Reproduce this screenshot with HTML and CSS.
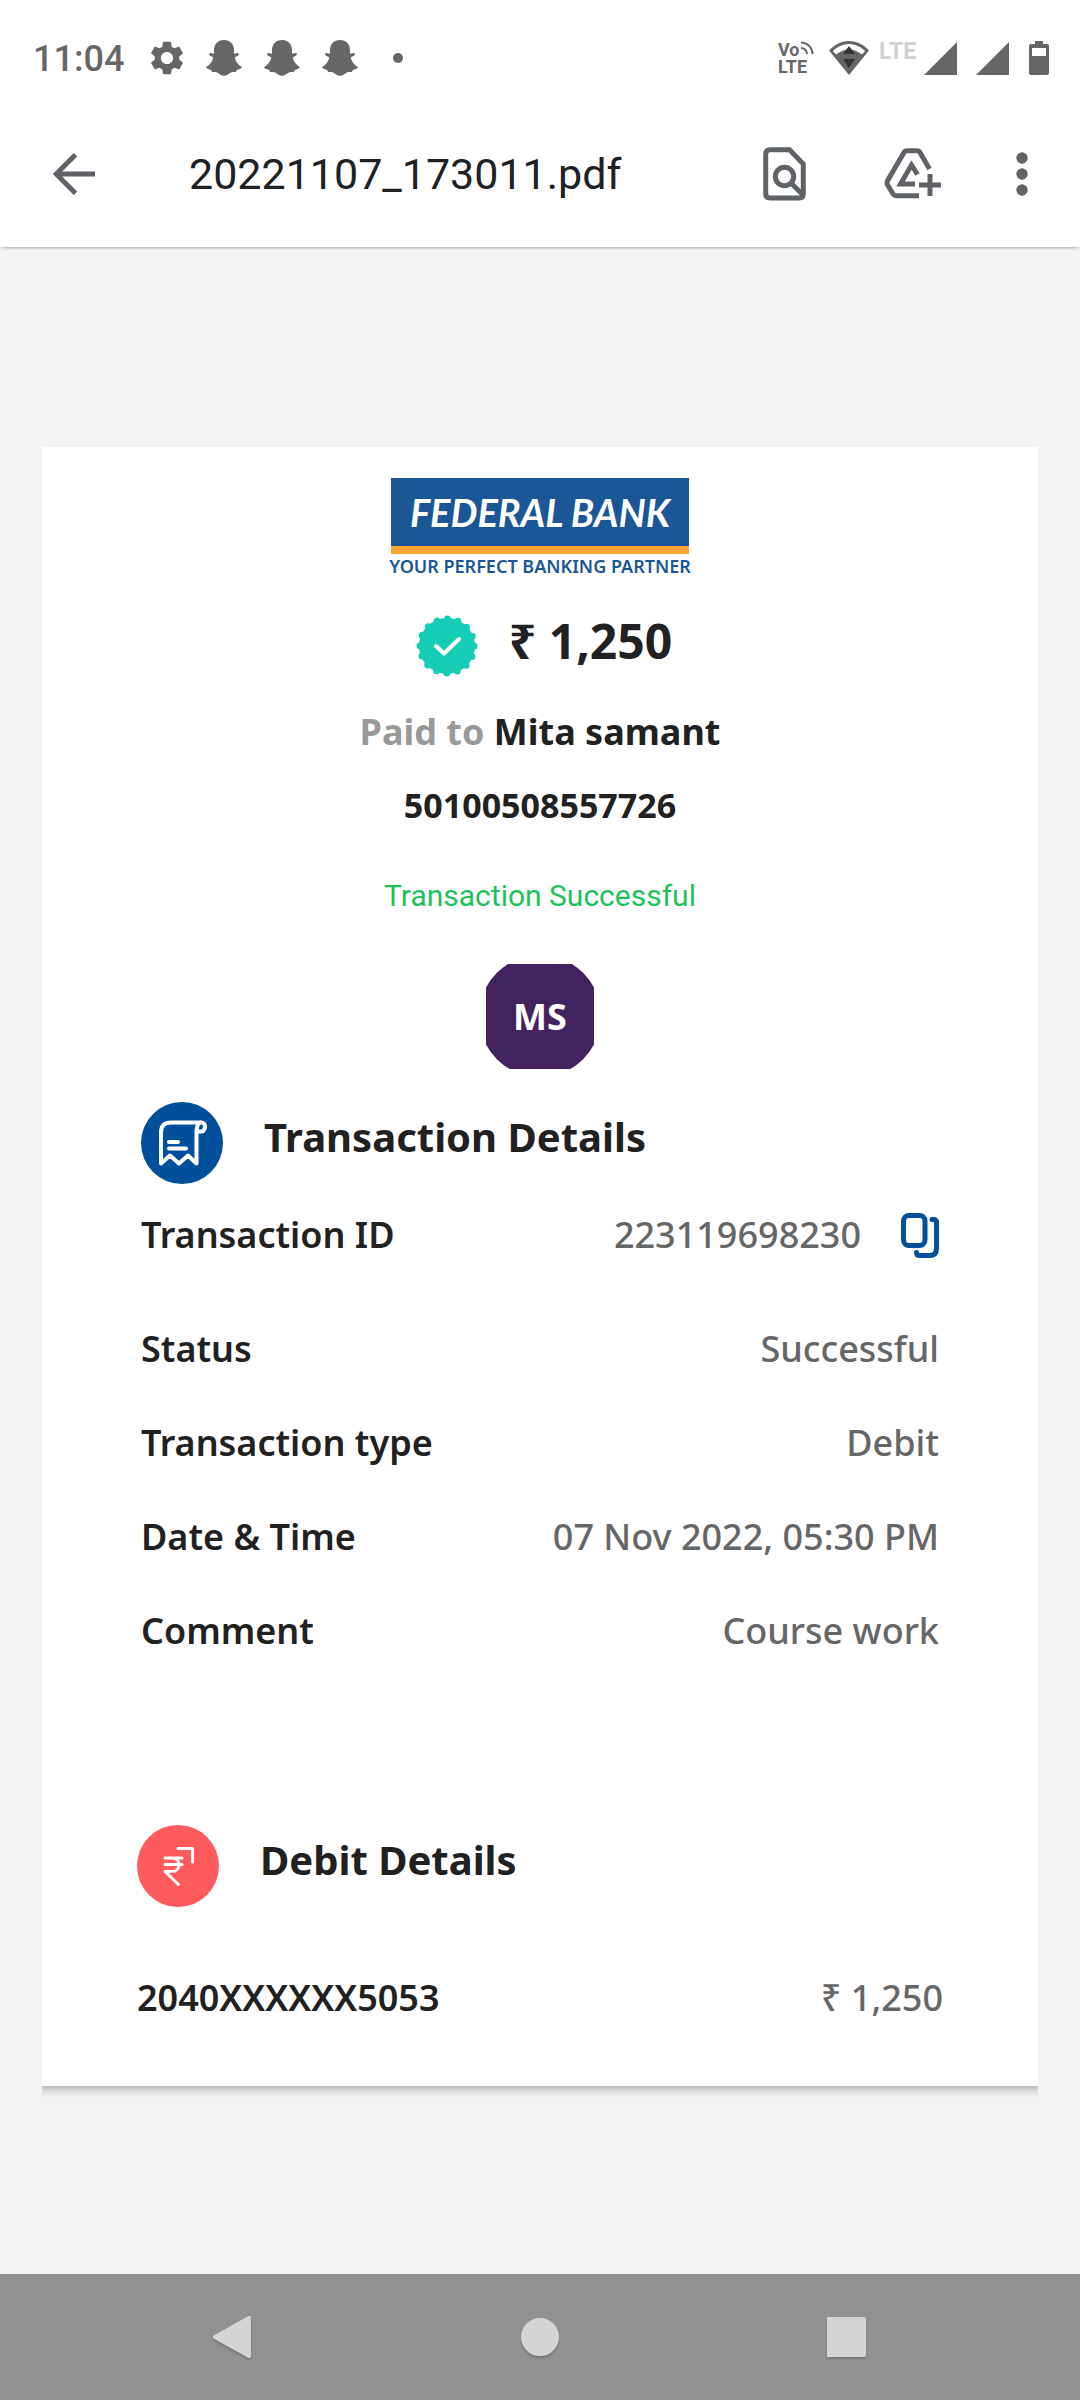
FILE: index.html
```html
<!DOCTYPE html>
<html lang="en">
<head>
<meta charset="utf-8">
<meta name="viewport" content="width=device-width, initial-scale=1">
<title>20221107_173011.pdf</title>
<link rel="stylesheet" href="styles.css">
</head>
<body>
<svg class="defs" aria-hidden="true">
  <symbol id="ghost" viewBox="0 0 36 36">
    <path d="M18 0C11.500 0 8 4.500 8 10.500v3.200l-3.800-.7c-1.300.1-1.400 1.900-.3 2.500l3.400 2C6.300 21.500 4 25 0 27.300c.7 1.500 3 2.100 5.300 2.700.2 1 .4 1.700 1.100 1.900 1.500.1 3.200-.2 4.700.5 2.300 1.200 3.600 3.300 6.900 3.300s4.600-2.100 6.900-3.300c1.500-.7 3.200-.4 4.700-.5.7-.2.9-.9 1.100-1.900 2.300-.6 4.600-1.200 5.300-2.700-4-2.300-6.300-5.800-7.300-9.800l3.400-2c1.100-.6 1-2.400-.3-2.500l-3.800.7v-3.200C28 4.500 24.500 0 18 0z"/>
  </symbol>
</svg>

<header class="status-bar">
  <div class="status-left">
    <time class="clock">11:04</time>
    <svg class="gear" viewBox="2 2 20 20" aria-hidden="true"><path d="M19.140 12.940c.04-.3.060-.61.060-.94 0-.32-.02-.64-.07-.94l2.030-1.580c.18-.14.230-.41.120-.61l-1.920-3.320c-.12-.22-.37-.29-.59-.22l-2.390.96c-.5-.38-1.030-.7-1.620-.94l-.36-2.540c-.04-.24-.24-.41-.48-.41h-3.840c-.24 0-.43.170-.47.410l-.36 2.540c-.59.240-1.130.570-1.620.940l-2.390-.96c-.22-.08-.47 0-.59.220L2.740 8.870c-.12.210-.08.470.120.610l2.030 1.580c-.05.300-.09.630-.09.940s.02.640.07.940l-2.030 1.580c-.18.140-.23.410-.12.610l1.920 3.320c.12.220.37.290.59.220l2.390-.96c.5.380 1.030.7 1.620.940l.36 2.540c.05.240.24.410.48.410h3.840c.24 0 .44-.17.470-.41l.36-2.540c.59-.24 1.130-.56 1.620-.94l2.390.96c.22.080.47 0 .59-.22l1.920-3.320c.12-.22.070-.47-.12-.61l-2.010-1.580zM12 15.600c-1.980 0-3.600-1.620-3.600-3.600s1.620-3.600 3.600-3.600 3.600 1.620 3.600 3.600-1.620 3.600-3.600 3.600z"/></svg>
    <svg class="ghost" aria-hidden="true"><use href="#ghost"/></svg>
    <svg class="ghost" aria-hidden="true"><use href="#ghost"/></svg>
    <svg class="ghost" aria-hidden="true"><use href="#ghost"/></svg>
    <span class="more-dot"></span>
  </div>
  <div class="status-right">
    <div class="volte">
      <span class="volte-top">Vo<svg class="volte-waves" viewBox="0 0 14 14" aria-hidden="true"><path d="M1 7a6 6 0 0 1 6 6M1 1.500a11.500 11.500 0 0 1 11.500 11.500"/></svg></span>
      <span>LTE</span>
    </div>
    <svg class="wifi" viewBox="0 0 40 34" aria-hidden="true">
      <path d="M20 34 0 9.500C5 4 12 0 20 0s15 4 20 9.500z"/>
      <path class="wifi-gap" d="M4 10c4-4 10-7 16-7s12 3 16 7l-3 3.500C29 10.500 25 8.500 20 8.500S11 10.500 7 13.500z"/>
      <path class="wifi-arrows" d="M20 5l6 8H14zM14 18h12l-6 9z"/>
    </svg>
    <div class="signals">
      <span class="network">LTE</span>
      <svg class="signal" viewBox="0 0 33 33" aria-hidden="true"><path d="M33 0v33H0z"/></svg>
      <svg class="signal second" viewBox="0 0 33 33" aria-hidden="true"><path d="M33 0v33H0z"/></svg>
    </div>
    <svg class="battery" viewBox="0 0 20 34" aria-hidden="true"><path fill-rule="evenodd" d="M6 0h8v3h4a2 2 0 0 1 2 2v27a2 2 0 0 1-2 2H2a2 2 0 0 1-2-2V5a2 2 0 0 1 2-2h4zM3 7v8h14V7z"/></svg>
  </div>
</header>

<nav class="app-bar" aria-label="Document">
  <button class="icon-button back" type="button" aria-label="Back">
    <svg width="42" height="42" viewBox="0 0 42 42"><path class="line" d="M42 21H4M22.500 1.700 3.200 21l19.300 19.300"/></svg>
  </button>
  <h1 class="file-name">20221107_173011.pdf</h1>
  <button class="icon-button find" type="button" aria-label="Find in document">
    <svg width="44" height="54" viewBox="0 0 44 54"><path class="line" d="M7 2.700h19.500L40.300 17v29.500q0 4.500-4 4.500H7q-4.300 0-4.300-4.500V7Q2.700 2.700 7 2.700z"/><circle class="line" cx="21.500" cy="29.500" r="9.200"/><path class="line" d="M28 36l12 12"/></svg>
  </button>
  <button class="icon-button drive" type="button" aria-label="Add to Drive">
    <svg width="58" height="52" viewBox="0 0 58 52"><path class="line" d="M45.500 21 36 4.600Q35 2.700 33 2.700H23Q21 2.700 20 4.600L3.600 32.500Q2.400 35 3.600 37L9.500 46.500Q10.500 47.700 12 47.700H35M31 36H16.500L27.500 17l6 9.500"/><path class="line" d="M46 26v22M35 37h22"/></svg>
  </button>
  <button class="icon-button" type="button" aria-label="More options">
    <svg width="12" height="44" viewBox="0 0 12 44"><circle cx="6" cy="6" r="5.700"/><circle cx="6" cy="22" r="5.700"/><circle cx="6" cy="38" r="5.700"/></svg>
  </button>
</nav>

<main class="viewer">
  <article class="page">
    <div class="bank-logo">
      <div class="bank-name">FEDERAL BANK</div>
      <div class="bank-tagline">YOUR PERFECT BANKING PARTNER</div>
    </div>

    <div class="amount-row">
      <svg class="badge" viewBox="-31 -31 62 62" aria-hidden="true">
        <circle r="28"/>
        <circle class="scallop" r="27"/>
        <path class="tick" d="M-11 0-3 7.500 12-7"/>
      </svg>
      <strong class="amount">₹ 1,250</strong>
    </div>
    <p class="payee"><span class="muted">Paid to</span> Mita samant</p>
    <p class="payee-account">50100508557726</p>
    <p class="result">Transaction Successful</p>
    <div class="avatar">
      <svg class="avatar-shape" viewBox="0 0 108 105" aria-hidden="true"><circle cx="54" cy="52" r="61"/></svg>
      <span class="initials">MS</span>
    </div>

    <section class="details">
      <div class="section-head">
        <svg class="section-icon" viewBox="0 0 82 82" aria-hidden="true">
          <circle class="blue" cx="41" cy="41" r="41"/>
          <path class="glyph" d="M60 20.500H30q-10 0-10 10v31l9-8 9 8 9-8 8.500 8V31q0-10.500 5-10.500c5.500 0 4 10-1 9h-3M28 40h9M28 46.500h17"/>
        </svg>
        <h2>Transaction Details</h2>
      </div>
      <dl class="rows">
        <div class="row row-id">
          <dt>Transaction ID</dt>
          <dd>223119698230
            <button class="copy" type="button" aria-label="Copy transaction ID">
              <svg width="38" height="46" viewBox="0 0 38 46"><rect x="2.500" y="2.500" width="21.500" height="30" rx="5.500"/><path d="M31 6.500h1.500q3 0 3 3v26q0 7-7 7h-10q-3 0-3-3"/></svg>
            </button>
          </dd>
        </div>
        <div class="row"><dt>Status</dt><dd>Successful</dd></div>
        <div class="row"><dt>Transaction type</dt><dd>Debit</dd></div>
        <div class="row"><dt>Date &amp; Time</dt><dd>07 Nov 2022, 05:30 PM</dd></div>
        <div class="row"><dt>Comment</dt><dd>Course work</dd></div>
      </dl>
    </section>

    <section class="debit">
      <div class="section-head">
        <svg class="section-icon" viewBox="0 0 82 82" aria-hidden="true">
          <circle class="red" cx="41" cy="41" r="41"/>
          <path class="glyph thin" d="M28 33h17M28 39.500h17M28 33h6.500c10 0 10 13.500 0 13.500H28L41.500 59.500M41 23.500h14.500V37"/>
        </svg>
        <h2>Debit Details</h2>
      </div>
      <dl class="rows">
        <div class="row"><dt>2040XXXXXX5053</dt><dd>₹ 1,250</dd></div>
      </dl>
    </section>
  </article>
</main>

<nav class="system-nav" aria-label="System">
  <button type="button" aria-label="Back"><svg width="42" height="44" viewBox="0 0 42 44"><path d="M38 3v38L4 22z"/></svg></button>
  <button type="button" aria-label="Home"><svg width="42" height="44" viewBox="0 0 42 44"><circle cx="21" cy="22" r="17"/></svg></button>
  <button type="button" aria-label="Recent apps"><svg width="42" height="44" viewBox="0 0 42 44"><path d="M1 4h36v36H1z"/></svg></button>
</nav>
</body>
</html>
```

FILE: styles.css
```css
* { box-sizing: border-box; }

body {
  margin: 0;
  min-height: 100vh;
  display: flex;
  flex-direction: column;
  background: #f1f3f4;
  color: #212121;
  font-family: "Noto Sans", "Open Sans", sans-serif;
}

h1, h2, p, dl, dd { margin: 0; }
svg { display: block; flex: none; }
.defs { position: absolute; width: 0; height: 0; }

button {
  padding: 0;
  border: 0;
  background: none;
  color: inherit;
  cursor: pointer;
}

/* Status bar */
.status-bar {
  height: 100px;
  padding: 16px 31px 0 33px;
  display: flex;
  align-items: center;
  justify-content: space-between;
  background: #fff;
  color: #666;
  fill: #666;
  font-family: Roboto, sans-serif;
}
.status-left, .status-right { display: flex; align-items: center; }
.clock { font-size: 36px; line-height: 44px; font-weight: 500; padding-top: 2px; }
.gear { width: 34px; height: 34px; margin-left: 26px; }
.ghost { width: 36px; height: 36px; margin-left: 22px; }
.more-dot { width: 10px; height: 10px; border-radius: 50%; background: #666; margin-left: 35px; }

.volte { width: 37px; font-size: 18px; line-height: 17px; font-weight: 700; }
.volte span { display: block; }
.volte .volte-top { display: flex; }
.volte-waves { width: 14px; height: 14px; fill: none; stroke: #666; stroke-width: 2; }
.wifi { width: 40px; height: 34px; margin-left: 14px; }
.wifi-gap { fill: #fff; }
.wifi-arrows { fill: #333; }
.signals { display: flex; align-items: flex-start; margin-left: 10px; }
.network { width: 45px; font-size: 23px; line-height: 20px; font-weight: 700; color: #d0d0d0; }
.signal { width: 33px; height: 33px; }
.signal.second { margin-left: 19px; }
.battery { width: 20px; height: 34px; margin-left: 20px; }

/* Document toolbar */
.app-bar {
  height: 147px;
  padding: 0 52px 0 53px;
  display: flex;
  align-items: center;
  background: #fff;
  box-shadow: 0 3px 3px -2px rgba(60, 64, 67, .4);
}
.icon-button { color: #5f6368; fill: #5f6368; }
.line { fill: none; stroke: #5f6368; stroke-width: 5; }
.file-name {
  flex: 1;
  min-width: 0;
  margin-left: 94px;
  font: 400 43px/56px Roboto, sans-serif;
  color: #202124;
}
.find { margin-right: 77px; }
.drive { margin-right: 74px; }

/* Receipt */
.viewer { flex: 1; padding: 200px 42px 0; }
.page {
  position: relative;
  padding: 31px 99px 64px;
  background: #fff;
  display: flex;
  flex-direction: column;
  align-items: center;
}
.page::after {
  content: "";
  position: absolute;
  top: 100%;
  left: 0;
  right: 0;
  height: 11px;
  background: linear-gradient(#b9bbbc, #dddfe0 50%, #f1f3f4);
}

.bank-logo { text-align: center; white-space: nowrap; }
.bank-name {
  width: 298px;
  margin: 0 auto;
  background: #1b5697;
  border-bottom: 8px solid #faa633;
  color: #fff;
  font: italic 700 38px/68px Lato, sans-serif;
}
.bank-tagline { color: #1b5697; font-size: 18px; line-height: 24px; font-weight: 600; }

.amount-row { display: flex; gap: 31px; height: 68px; margin: 31px 0 0 8px; }
.badge { width: 62px; height: 62px; align-self: flex-end; fill: #16cdb5; }
.scallop { fill: none; stroke: #16cdb5; stroke-width: 7; stroke-linecap: round; stroke-dasharray: 0 10.602; }
.tick { fill: none; stroke: #fff; stroke-width: 4; stroke-linecap: round; stroke-linejoin: round; }
.amount { font-size: 48px; line-height: 64px; }

.payee { margin-top: 31px; font-size: 36px; line-height: 48px; font-weight: 700; }
.muted { color: #999; }
.payee-account { margin-top: 25px; font-size: 34px; line-height: 48px; font-weight: 700; }
.result { margin-top: 47px; font: 400 30px/40px Roboto, sans-serif; color: #1fc15a; }

.avatar { display: grid; place-items: center; margin-top: 48px; }
.avatar-shape, .initials { grid-area: 1 / 1; }
.avatar-shape { width: 108px; height: 105px; fill: #42225f; overflow: hidden; }
.initials { color: #fff; font-size: 36px; line-height: 48px; font-weight: 700; }

.details, .debit { align-self: stretch; }
.details { margin-top: 33px; }
.debit { margin: 170px -4px 0; }
.section-head { display: flex; align-items: center; gap: 41px; }
.section-head h2 { padding-bottom: 12px; font-size: 40px; line-height: 56px; font-weight: 700; }
.section-icon { width: 82px; height: 82px; }
.blue { fill: #024f9b; }
.red { fill: #ff5a5c; }
.glyph { fill: none; stroke: #fff; stroke-width: 4; stroke-linecap: round; stroke-linejoin: round; }
.glyph.thin { stroke-width: 3; }

.rows { display: grid; gap: 46px; margin-top: 27px; }
.debit .rows { margin-top: 67px; }
.row {
  display: flex;
  justify-content: space-between;
  font-size: 36px;
  line-height: 48px;
}
.row-id { padding-bottom: 20px; }
.row dt { font-weight: 600; }
.row dd { display: flex; align-items: center; color: #666; font-weight: 500; }
.copy { margin-left: 40px; padding-top: 2px; }
.copy svg { fill: none; stroke: #024f9b; stroke-width: 5; stroke-linecap: round; }

/* System navigation */
.system-nav {
  height: 126px;
  display: flex;
  align-items: center;
  justify-content: space-around;
  padding: 0 78px;
  background: #909291;
}
.system-nav svg { fill: #d4d4d4; stroke: #d4d4d4; stroke-width: 4; stroke-linejoin: round; filter: drop-shadow(0 2px 1px rgba(0, 0, 0, .2)); }
```
